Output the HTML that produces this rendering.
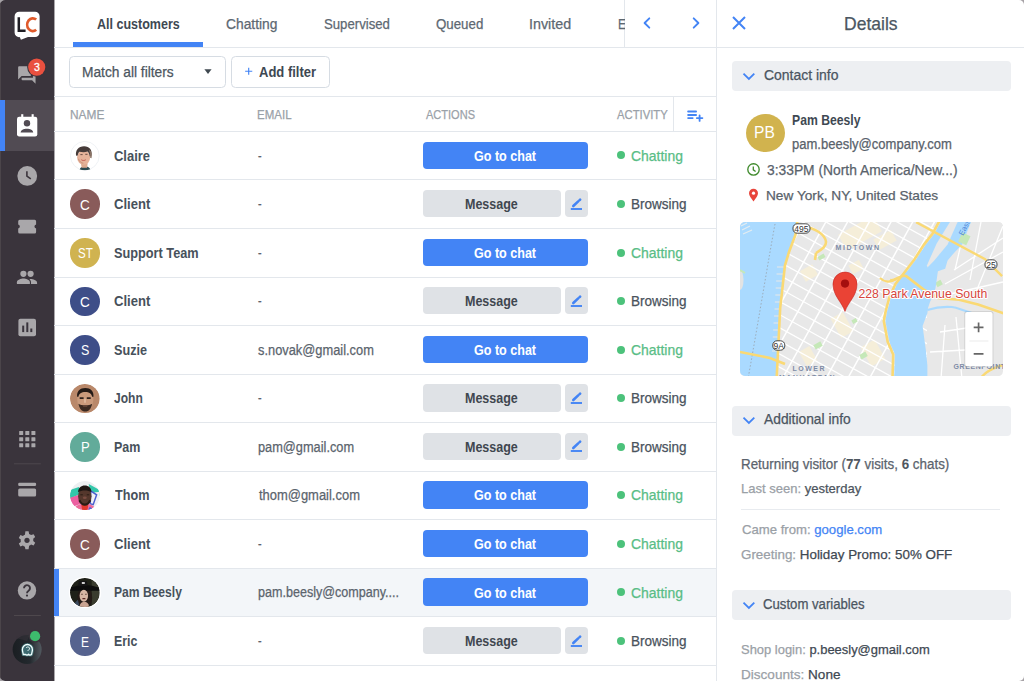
<!DOCTYPE html><html><head><meta charset="utf-8"><style>
*{box-sizing:border-box;margin:0;padding:0}
html,body{width:1024px;height:681px;overflow:hidden;background:#a6a2a6}
body{font-family:"Liberation Sans",sans-serif;position:relative}
.app{position:absolute;left:0;top:0;width:1024px;height:681px;background:#fff;border-radius:5px;overflow:hidden}
.a{position:absolute}
.t{position:absolute;white-space:nowrap;line-height:1;transform-origin:0 0}
.r{-webkit-text-stroke:0.25px currentColor}
.t b{-webkit-text-stroke:0}
.hl{position:absolute;height:1px;background:#e3e7ec}
.vl{position:absolute;width:1px;background:#e3e7ec}
.av{position:absolute;width:30px;height:30px;border-radius:50%;color:#fff;font-size:14px;line-height:30px;text-align:center}
.btn{position:absolute;border-radius:4px}
.sec{position:absolute;left:731.5px;width:279.5px;height:30px;background:#edeff2;border-radius:4px}
</style></head><body><div class="app">
<div class="a" style="left:0;top:0;width:54px;height:681px;background:#3a343c"></div><div class="a" style="left:0;top:0;width:1px;height:681px;background:#4b454a"></div><div class="a" style="left:54px;top:0;width:1px;height:681px;background:#a9a6aa"></div>
<div class="a" style="left:0;top:100px;width:54px;height:51px;background:#514b53"></div>
<div class="a" style="left:0;top:100px;width:5px;height:51px;background:#4384f5"></div>
<div class="hl" style="left:54px;top:47px;width:970px"></div>
<div class="vl" style="left:624px;top:0;height:47px"></div>
<div class="vl" style="left:716px;top:0;height:681px"></div>
<div class="hl" style="left:54px;top:96px;width:662px"></div>
<div class="vl" style="left:672.5px;top:97px;height:34px"></div>
<div class="a" style="left:73.4px;top:42px;width:129.3px;height:5px;background:#4384f5"></div>
<div class="a" style="left:69px;top:56.4px;width:157.4px;height:31.2px;border:1.3px solid #d6dce3;border-radius:4.5px"></div>
<div class="a" style="left:231.2px;top:56.4px;width:99.1px;height:31.2px;border:1.3px solid #d6dce3;border-radius:4.5px"></div>
<svg class="a" style="left:203px;top:68px" width="11" height="8"><path d="M1.4 1.3h7.2l-3.6 4.6z" fill="#3f4850"/></svg>
<svg class="a" style="left:244px;top:67px" width="10" height="10"><path d="M4.7 0.7v7.1M1.15 4.25h7.1" stroke="#4384f5" stroke-width="1.15"/></svg>
<svg class="a" style="left:641px;top:16px" width="12" height="14"><path d="M8.3 2.3L3.6 7l4.7 4.7" stroke="#4384f5" stroke-width="1.9" stroke-linecap="round" stroke-linejoin="round" fill="none"/></svg>
<svg class="a" style="left:690px;top:16px" width="12" height="14"><path d="M3.7 2.3L8.4 7l-4.7 4.7" stroke="#4384f5" stroke-width="1.9" stroke-linecap="round" stroke-linejoin="round" fill="none"/></svg>
<svg class="a" style="left:686px;top:110px" width="19" height="14"><path d="M2.1 1.5h8M2.1 5h8M2.1 8.1h4.6M10.8 8.1h5.6M13.6 5.3v5.6" stroke="#4384f5" stroke-width="1.8" stroke-linecap="round" fill="none"/></svg>
<div class="hl" style="left:54px;top:130.95px;width:662px"></div>
<div class="a" id="photo1" style="left:70.3px;top:140.95px;width:29.6px;height:29.6px;border-radius:50%;overflow:hidden"><svg width="29.6" height="29.6" viewBox="0 0 30 30"><defs><clipPath id="c1"><circle cx="15" cy="15" r="14.6"/></clipPath></defs><circle cx="15" cy="15" r="14.6" fill="#fff" stroke="#e8ecf0" stroke-width="0.7"/><g clip-path="url(#c1)">
<path d="M9.5 30c.5-2.5 2-4 5-4.3s5.5 1 6.5 4.3z" fill="#2c4a50"/>
<path d="M11 22l.8 5h5.5l.6-4.5z" fill="#dca98f"/>
<ellipse cx="13.8" cy="16.8" rx="6.6" ry="7.4" fill="#e6b39a"/>
<path d="M8.5 18c1 3 3 4.5 5 4.5" stroke="#c98f78" stroke-width="1" fill="none"/>
<path d="M6.2 15c-1-5.5 2.5-9.5 8-9.6 5.3-.1 8.5 3.6 7.6 9l-1.8 1.3c-.4-2.3-1-4-2.4-5-2.4.9-5.5.7-8 .2-1.2 1-1.6 2.5-1.7 3.9z" fill="#463b39"/>
<path d="M19.5 8.5c2.5 1.8 3.2 5 2.3 9l-1.4-.5c.2-2.5-.2-5-.9-6.5z" fill="#8a7365"/>
<path d="M10.5 13.8h2.3M15.5 13.5h2.3" stroke="#5a4038" stroke-width="0.9"/>
<path d="M11.5 19c1.2 1 3.2 1 4.5 0" stroke="#c0584f" stroke-width="1" fill="none"/></g></svg></div>
<div class="btn" style="left:423.3px;top:141.55px;width:164.4px;height:27.3px;background:#4384f5"></div>
<div class="a" style="left:616.7px;top:151.45px;width:8px;height:8px;border-radius:50%;background:#4cc27b"></div>
<div class="hl" style="left:54px;top:179.49px;width:662px"></div>
<div class="a" style="left:70.3px;top:189.49px;width:29.6px;height:29.6px;border-radius:50%;background:#895b5a"></div>
<div class="btn" style="left:423.3px;top:190.09px;width:137.5px;height:27.3px;background:#dfe2e6"></div>
<div class="btn" style="left:564.9px;top:190.09px;width:22.8px;height:27.3px;background:#dfe2e6"></div>
<svg class="a" style="left:569px;top:195.69px" width="15" height="15"><path d="M4.3 10L9.2 5.4" stroke="#4384f5" stroke-width="2.6" stroke-linecap="round"/><path d="M10.6 4.1l.5-.5" stroke="#4384f5" stroke-width="2.7" stroke-linecap="round"/><path d="M1.8 13h11.2" stroke="#4384f5" stroke-width="1.9"/></svg>
<div class="a" style="left:616.7px;top:199.99px;width:8px;height:8px;border-radius:50%;background:#4cc27b"></div>
<div class="hl" style="left:54px;top:228.03px;width:662px"></div>
<div class="a" style="left:70.3px;top:238.03px;width:29.6px;height:29.6px;border-radius:50%;background:#d0b350"></div>
<div class="btn" style="left:423.3px;top:238.63px;width:164.4px;height:27.3px;background:#4384f5"></div>
<div class="a" style="left:616.7px;top:248.53px;width:8px;height:8px;border-radius:50%;background:#4cc27b"></div>
<div class="hl" style="left:54px;top:276.57px;width:662px"></div>
<div class="a" style="left:70.3px;top:286.57px;width:29.6px;height:29.6px;border-radius:50%;background:#3e4e88"></div>
<div class="btn" style="left:423.3px;top:287.17px;width:137.5px;height:27.3px;background:#dfe2e6"></div>
<div class="btn" style="left:564.9px;top:287.17px;width:22.8px;height:27.3px;background:#dfe2e6"></div>
<svg class="a" style="left:569px;top:292.77px" width="15" height="15"><path d="M4.3 10L9.2 5.4" stroke="#4384f5" stroke-width="2.6" stroke-linecap="round"/><path d="M10.6 4.1l.5-.5" stroke="#4384f5" stroke-width="2.7" stroke-linecap="round"/><path d="M1.8 13h11.2" stroke="#4384f5" stroke-width="1.9"/></svg>
<div class="a" style="left:616.7px;top:297.07px;width:8px;height:8px;border-radius:50%;background:#4cc27b"></div>
<div class="hl" style="left:54px;top:325.11px;width:662px"></div>
<div class="a" style="left:70.3px;top:335.11px;width:29.6px;height:29.6px;border-radius:50%;background:#3e4e88"></div>
<div class="btn" style="left:423.3px;top:335.71px;width:164.4px;height:27.3px;background:#4384f5"></div>
<div class="a" style="left:616.7px;top:345.61px;width:8px;height:8px;border-radius:50%;background:#4cc27b"></div>
<div class="hl" style="left:54px;top:373.65px;width:662px"></div>
<div class="a" id="photo2" style="left:70.3px;top:383.65px;width:29.6px;height:29.6px;border-radius:50%;overflow:hidden"><svg width="29.6" height="29.6" viewBox="0 0 30 30"><circle cx="15" cy="15" r="15" fill="#b9886a"/>
<ellipse cx="15.5" cy="16" rx="8.2" ry="11" fill="#c99a7c"/>
<path d="M7.2 13c-.5-6 3-9 8.3-9s8.8 3 8.3 9l-1.4-.2c-.3-3-3-4.8-6.9-4.8s-6.6 1.8-6.9 4.8z" fill="#231a17"/>
<path d="M9.8 14.3h4M17 14.3h4" stroke="#2e211c" stroke-width="1.8"/>
<path d="M15.2 15v4" stroke="#e8c8b0" stroke-width="1.2"/>
<path d="M8.5 20c1 5 3.5 8 7 8s6-3 7-8c-1.8 1-4 1.6-7 1.6s-5.2-.6-7-1.6z" fill="#3a2a22"/>
<path d="M13.3 22.5h4.2" stroke="#6b4a3c" stroke-width="1.2"/></svg></div>
<div class="btn" style="left:423.3px;top:384.25px;width:137.5px;height:27.3px;background:#dfe2e6"></div>
<div class="btn" style="left:564.9px;top:384.25px;width:22.8px;height:27.3px;background:#dfe2e6"></div>
<svg class="a" style="left:569px;top:389.85px" width="15" height="15"><path d="M4.3 10L9.2 5.4" stroke="#4384f5" stroke-width="2.6" stroke-linecap="round"/><path d="M10.6 4.1l.5-.5" stroke="#4384f5" stroke-width="2.7" stroke-linecap="round"/><path d="M1.8 13h11.2" stroke="#4384f5" stroke-width="1.9"/></svg>
<div class="a" style="left:616.7px;top:394.15px;width:8px;height:8px;border-radius:50%;background:#4cc27b"></div>
<div class="hl" style="left:54px;top:422.19px;width:662px"></div>
<div class="a" style="left:70.3px;top:432.19px;width:29.6px;height:29.6px;border-radius:50%;background:#62ab9a"></div>
<div class="btn" style="left:423.3px;top:432.79px;width:137.5px;height:27.3px;background:#dfe2e6"></div>
<div class="btn" style="left:564.9px;top:432.79px;width:22.8px;height:27.3px;background:#dfe2e6"></div>
<svg class="a" style="left:569px;top:438.39px" width="15" height="15"><path d="M4.3 10L9.2 5.4" stroke="#4384f5" stroke-width="2.6" stroke-linecap="round"/><path d="M10.6 4.1l.5-.5" stroke="#4384f5" stroke-width="2.7" stroke-linecap="round"/><path d="M1.8 13h11.2" stroke="#4384f5" stroke-width="1.9"/></svg>
<div class="a" style="left:616.7px;top:442.69px;width:8px;height:8px;border-radius:50%;background:#4cc27b"></div>
<div class="hl" style="left:54px;top:470.73px;width:662px"></div>
<div class="a" id="photo3" style="left:70.3px;top:480.73px;width:29.6px;height:29.6px;border-radius:50%;overflow:hidden"><svg width="29.6" height="29.6" viewBox="0 0 30 30"><defs><clipPath id="c3"><circle cx="15" cy="15" r="15"/></clipPath></defs><g clip-path="url(#c3)">
<rect width="30" height="30" fill="#eef0f2"/>
<path d="M0 9l9-3 2 7-11 5z" fill="#33c7aa"/><path d="M19 3l11 6v6l-10-5z" fill="#33c7aa"/>
<path d="M0 17l9-3 2 9-11 4z" fill="#ec5fa0"/><path d="M23 12l7-1v9l-7 3z" fill="#f2f2f6"/>
<path d="M21 10l6 4-3.5 10-3-1z" stroke="#4a5fcf" stroke-width="1.5" fill="none"/>
<path d="M3 30c2-5 6-7 12-7s10 2 12 7z" fill="#ec6a9a"/><path d="M11.5 24h7l-.8 6h-5.4z" fill="#e23a2f"/><path d="M20 26l6 4h-8z" fill="#4a68d6"/>
<ellipse cx="15" cy="15.5" rx="6.8" ry="9" fill="#54372c"/>
<path d="M8.2 11.5c0-4.5 3-7 6.8-7s6.8 2.5 6.8 7c-2-1.3-4.2-1.8-6.8-1.8s-4.8.5-6.8 1.8z" fill="#1f1714"/>
<path d="M9.5 19.5c1.5 3 3.5 4.5 5.5 4.5s4-1.5 5.5-4.5" stroke="#2a1c15" stroke-width="2.2" fill="none"/>
<ellipse cx="15" cy="17" rx="2" ry="1.3" fill="#7a4d42"/><path d="M10.5 14h2.5M17 14h2.5" stroke="#2a1c15" stroke-width="1"/></g></svg></div>
<div class="btn" style="left:423.3px;top:481.33px;width:164.4px;height:27.3px;background:#4384f5"></div>
<div class="a" style="left:616.7px;top:491.23px;width:8px;height:8px;border-radius:50%;background:#4cc27b"></div>
<div class="hl" style="left:54px;top:519.27px;width:662px"></div>
<div class="a" style="left:70.3px;top:529.27px;width:29.6px;height:29.6px;border-radius:50%;background:#895b5a"></div>
<div class="btn" style="left:423.3px;top:529.87px;width:164.4px;height:27.3px;background:#4384f5"></div>
<div class="a" style="left:616.7px;top:539.77px;width:8px;height:8px;border-radius:50%;background:#4cc27b"></div>
<div class="a" style="left:54px;top:568.31px;width:662px;height:48.54px;background:#f3f6f9"></div>
<div class="a" style="left:54px;top:568.31px;width:4.5px;height:48.54px;background:#4384f5"></div>
<div class="hl" style="left:54px;top:567.81px;width:662px"></div>
<div class="a" id="photo4" style="box-shadow:0 0 0 1.2px #fff;left:70.3px;top:577.81px;width:29.6px;height:29.6px;border-radius:50%;overflow:hidden"><svg width="29.6" height="29.6" viewBox="0 0 30 30"><defs><clipPath id="c4"><circle cx="15" cy="15" r="15"/></clipPath></defs><g clip-path="url(#c4)">
<rect width="30" height="30" fill="#1f2118"/><rect x="22" y="0" width="8" height="30" fill="#3a3c2e"/>
<path d="M0 10c5-2 10-3 15-3s10 1 15 3v3H0z" fill="#0d0d0d"/>
<path d="M9 3h8l1 5H8z" fill="#151515"/><path d="M12 4h3v2h-3z" fill="#cfcfcf"/>
<path d="M9 13c-2 4-2 10 0 14h12c2-4 2-10 0-14z" fill="#241a16"/>
<ellipse cx="14" cy="18" rx="4.3" ry="6" fill="#d7b6a4"/>
<path d="M10 27c1-2 2.5-3 4.5-3s3.5 1 4.5 3v3h-9z" fill="#c9a391"/>
<path d="M12.6 21h3" stroke="#5a2a26" stroke-width="1.2"/>
<path d="M11.4 16.5h1.5M15.4 16.5h1.5" stroke="#4a302a" stroke-width="0.9"/>
<path d="M4 26l4-4 2 8H4z" fill="#3b4a5e"/></g></svg></div>
<div class="btn" style="left:423.3px;top:578.41px;width:164.4px;height:27.3px;background:#4384f5"></div>
<div class="a" style="left:616.7px;top:588.31px;width:8px;height:8px;border-radius:50%;background:#4cc27b"></div>
<div class="hl" style="left:54px;top:616.35px;width:662px"></div>
<div class="a" style="left:70.3px;top:626.35px;width:29.6px;height:29.6px;border-radius:50%;background:#56638f"></div>
<div class="btn" style="left:423.3px;top:626.95px;width:137.5px;height:27.3px;background:#dfe2e6"></div>
<div class="btn" style="left:564.9px;top:626.95px;width:22.8px;height:27.3px;background:#dfe2e6"></div>
<svg class="a" style="left:569px;top:632.55px" width="15" height="15"><path d="M4.3 10L9.2 5.4" stroke="#4384f5" stroke-width="2.6" stroke-linecap="round"/><path d="M10.6 4.1l.5-.5" stroke="#4384f5" stroke-width="2.7" stroke-linecap="round"/><path d="M1.8 13h11.2" stroke="#4384f5" stroke-width="1.9"/></svg>
<div class="a" style="left:616.7px;top:636.85px;width:8px;height:8px;border-radius:50%;background:#4cc27b"></div>
<div class="hl" style="left:54px;top:664.89px;width:662px"></div>
<svg class="a" style="left:731px;top:15px" width="16" height="16"><path d="M2 2l12 12M14 2L2 14" stroke="#4384f5" stroke-width="2"/></svg>
<div class="sec" style="top:61px"></div>
<svg class="a" style="left:742px;top:70.5px" width="14" height="10"><path d="M1.5 2.6l5.4 5.4 5.4-5.4" stroke="#4384f5" stroke-width="1.8" fill="none"/></svg>
<div class="sec" style="top:405.5px"></div>
<svg class="a" style="left:742px;top:415.0px" width="14" height="10"><path d="M1.5 2.6l5.4 5.4 5.4-5.4" stroke="#4384f5" stroke-width="1.8" fill="none"/></svg>
<div class="sec" style="top:590.3px"></div>
<svg class="a" style="left:742px;top:599.8px" width="14" height="10"><path d="M1.5 2.6l5.4 5.4 5.4-5.4" stroke="#4384f5" stroke-width="1.8" fill="none"/></svg>
<div class="a" style="left:745.9px;top:113.7px;width:38.8px;height:38.8px;border-radius:50%;background:#d1b34e"></div>
<svg class="a" style="left:746px;top:162px" width="15" height="15"><circle cx="7.5" cy="7.4" r="5.7" stroke="#3f8a2c" stroke-width="1.35" fill="none"/><path d="M7.3 4.4v3.4l2.3 1.7" stroke="#3f8a2c" stroke-width="1.3" fill="none"/></svg>
<svg class="a" style="left:748px;top:188px" width="11" height="14"><path d="M5.5 13.5C3 10 1 7.6 1 5.2A4.5 4.5 0 0 1 10 5.2C10 7.6 8 10 5.5 13.5z" fill="#e8453c"/><circle cx="5.5" cy="5.2" r="1.6" fill="#fff"/></svg>
<div class="hl" style="left:741.2px;top:508.5px;width:259.3px;background:#e8ebef"></div>
<div id="map" class="a" style="left:740.2px;top:221.6px;width:262.6px;height:154.4px;border-radius:5px;overflow:hidden;background:#e8e8e8"><svg class="a" style="left:0;top:0" width="262.6" height="154.4" viewBox="0 0 262.6 154.4">
<rect width="262.6" height="154.4" fill="#e8e8e8"/>
<rect x="100" y="2" width="40" height="18" fill="#f5eed9" transform="rotate(-29 120.0 11.0)"/>
<rect x="62" y="45" width="14" height="12" fill="#f5eed9" transform="rotate(-29 69.0 51.0)"/>
<rect x="95" y="92" width="14" height="22" fill="#f5eed9" transform="rotate(-29 102.0 103.0)"/>
<rect x="125" y="120" width="16" height="22" fill="#f5eed9" transform="rotate(-29 133.0 131.0)"/>
<rect x="62" y="126" width="12" height="16" fill="#f5eed9" transform="rotate(-29 68.0 134.0)"/>
<rect x="135" y="12" width="20" height="12" fill="#f5eed9" transform="rotate(-29 145.0 18.0)"/>
<rect x="206" y="100" width="10" height="16" fill="#f5eed9" transform="rotate(-29 211.0 108.0)"/>
<rect x="110" y="40" width="12" height="10" fill="#f5eed9" transform="rotate(-29 116.0 45.0)"/>
<path d="M-52.6 -418.7L647.1 -30.8M-58.2 -408.6L641.5 -20.8M-63.7 -398.6L636.0 -10.7M-69.3 -388.5L630.4 -0.6M-74.9 -378.4L624.8 9.4M-80.5 -368.4L619.2 19.5M-86.0 -358.3L613.7 29.5M-91.6 -348.3L608.1 39.6M-97.2 -338.2L602.5 49.6M-102.8 -328.1L596.9 59.7M-108.3 -318.1L591.4 69.8M-113.9 -308.0L585.8 79.8M-119.5 -298.0L580.2 89.9M-125.1 -287.9L574.6 99.9M-130.6 -277.9L569.1 110.0M-136.2 -267.8L563.5 120.1M-141.8 -257.7L557.9 130.1M-147.4 -247.7L552.3 140.2M-152.9 -237.6L546.8 150.2M-158.5 -227.6L541.2 160.3M-164.1 -217.5L535.6 170.3M-169.7 -207.4L530.0 180.4M-175.2 -197.4L524.5 190.5M-180.8 -187.3L518.9 200.5M-186.4 -177.3L513.3 210.6M-192.0 -167.2L507.7 220.6M-197.5 -157.2L502.1 230.7M-203.1 -147.1L496.6 240.7M-208.7 -137.0L491.0 250.8M-214.3 -127.0L485.4 260.9M-219.8 -116.9L479.8 270.9M-225.4 -106.9L474.3 281.0M-231.0 -96.8L468.7 291.0M-236.6 -86.7L463.1 301.1M-242.1 -76.7L457.5 311.2M-247.7 -66.6L452.0 321.2M-253.3 -56.6L446.4 331.3M-258.9 -46.5L440.8 341.3M-264.5 -36.5L435.2 351.4M-270.0 -26.4L429.7 361.4M-275.6 -16.3L424.1 371.5M-281.2 -6.3L418.5 381.6M-286.8 3.8L412.9 391.6M-292.3 13.8L407.4 401.7M-297.9 23.9L401.8 411.7M-303.5 33.9L396.2 421.8M-309.1 44.0L390.6 431.9M-314.6 54.1L385.1 441.9M-320.2 64.1L379.5 452.0M-325.8 74.2L373.9 462.0M-331.4 84.2L368.3 472.1M-336.9 94.3L362.8 482.1M-342.5 104.4L357.2 492.2M-348.1 114.4L351.6 502.3M-353.7 124.5L346.0 512.3M-359.2 134.5L340.5 522.4M-364.8 144.6L334.9 532.4M-370.4 154.6L329.3 542.5M-376.0 164.7L323.7 552.6M-381.5 174.8L318.2 562.6M-387.1 184.8L312.6 572.7" stroke="#fff" stroke-width="1.3"/>
<path d="M-562.5 150.5L-174.6 -549.2M-545.8 159.7L-158.0 -540.0M-529.2 168.9L-141.4 -530.8M-512.6 178.1L-124.8 -521.6M-496.0 187.4L-108.1 -512.3M-479.4 196.6L-91.5 -503.1M-462.8 205.8L-74.9 -493.9M-446.1 215.0L-58.3 -484.7M-429.5 224.2L-41.7 -475.5M-412.9 233.4L-25.0 -466.3M-396.3 242.6L-8.4 -457.1M-379.7 251.8L8.2 -447.9M-363.0 261.0L24.8 -438.7M-346.4 270.3L41.4 -429.4M-329.8 279.5L58.0 -420.2M-313.2 288.7L74.7 -411.0M-296.6 297.9L91.3 -401.8M-280.0 307.1L107.9 -392.6M-263.3 316.3L124.5 -383.4M-246.7 325.5L141.1 -374.2M-230.1 334.7L157.7 -365.0M-213.5 343.9L174.4 -355.8M-196.9 353.2L191.0 -346.5M-180.2 362.4L207.6 -337.3M-163.6 371.6L224.2 -328.1M-147.0 380.8L240.8 -318.9M-130.4 390.0L257.5 -309.7M-113.8 399.2L274.1 -300.5M-97.2 408.4L290.7 -291.3M-80.5 417.6L307.3 -282.1M-63.9 426.8L323.9 -272.8M-47.3 436.1L340.5 -263.6M-30.7 445.3L357.2 -254.4M-14.1 454.5L373.8 -245.2M2.5 463.7L390.4 -236.0M19.2 472.9L407.0 -226.8M35.8 482.1L423.6 -217.6M52.4 491.3L440.2 -208.4M69.0 500.5L456.9 -199.2M85.6 509.8L473.5 -189.9M102.3 519.0L490.1 -180.7M118.9 528.2L506.7 -171.5M135.5 537.4L523.3 -162.3M152.1 546.6L540.0 -153.1M168.7 555.8L556.6 -143.9M185.3 565.0L573.2 -134.7M202.0 574.2L589.8 -125.5M218.6 583.4L606.4 -116.3M235.2 592.7L623.0 -107.0M251.8 601.9L639.7 -97.8M268.4 611.1L656.3 -88.6M285.0 620.3L672.9 -79.4M301.7 629.5L689.5 -70.2M318.3 638.7L706.1 -61.0M334.9 647.9L722.8 -51.8M351.5 657.1L739.4 -42.6M368.1 666.3L756.0 -33.4M384.8 675.6L772.6 -24.1M401.4 684.8L789.2 -14.9M418.0 694.0L805.8 -5.7M434.6 703.2L822.5 3.5" stroke="#fff" stroke-width="1.5"/>
<g clip-path="url(#qclip)"><rect x="150" y="0" width="120" height="160" fill="#e8e8e8"/><path d="M205 62L263 30M210 72L263 60M214 48L263 16M215 48L226 0M230 58L241 0M236 70L263 4M200 110L240 104M205 103L201 157M216 95L222 157M228 100L250 150M190 130L225 128" stroke="#fff" stroke-width="1.3" fill="none"/></g>
<defs><clipPath id="qclip"><polygon points="196,48 205,30 222,0 263,0 263,155 187,155 187,88"/></clipPath></defs>
<rect x="78" y="33" width="7" height="4" fill="#c5e8b8" transform="rotate(-29 81.5 35.0)"/>
<rect x="112" y="97" width="5" height="4" fill="#c5e8b8" transform="rotate(-29 114.5 99.0)"/>
<rect x="74" y="121" width="8" height="5" fill="#c5e8b8" transform="rotate(-29 78.0 123.5)"/>
<rect x="120" y="131" width="7" height="5" fill="#c5e8b8" transform="rotate(-29 123.5 133.5)"/>
<rect x="196" y="59" width="6" height="5" fill="#c5e8b8" transform="rotate(-29 199.0 61.5)"/>
<rect x="210" y="4" width="7" height="12" fill="#c5e8b8" transform="rotate(-29 213.5 10.0)"/>
<polygon points="0,0 57,0 55.4,12.9 49,30 44.9,43.5 42,70 40.2,85.8 38.5,120 36.6,157 0,157" fill="#aadaff"/>
<path d="M2 8l8-4M3 12l9-4M1 4l6-3" stroke="#e4ecf0" stroke-width="1.2"/><ellipse cx="0" cy="58" rx="3.5" ry="10" fill="#e3e3e3"/><path d="M0 48l5 3" stroke="#c5e8b8" stroke-width="2"/>
<path d="M35 2C28 40 20 90 8 157" stroke="#9aa7b3" stroke-width="0.9" stroke-dasharray="1.5 2" fill="none"/>
<path d="M44.0 45h-7" stroke="#e8e8e8" stroke-width="1.2"/>
<path d="M43.6 52h-7" stroke="#e8e8e8" stroke-width="1.2"/>
<path d="M43.2 59h-7" stroke="#e8e8e8" stroke-width="1.2"/>
<path d="M42.7 66h-7" stroke="#e8e8e8" stroke-width="1.2"/>
<path d="M42.3 73h-7" stroke="#e8e8e8" stroke-width="1.2"/>
<path d="M41.9 80h-7" stroke="#e8e8e8" stroke-width="1.2"/>
<path d="M41.5 87h-7" stroke="#e8e8e8" stroke-width="1.2"/>
<path d="M41.1 94h-7" stroke="#e8e8e8" stroke-width="1.2"/>
<path d="M40.6 101h-7" stroke="#e8e8e8" stroke-width="1.2"/>
<path d="M40.2 108h-7" stroke="#e8e8e8" stroke-width="1.2"/>
<path d="M39.8 115h-7" stroke="#e8e8e8" stroke-width="1.2"/>
<path d="M39.4 122h-7" stroke="#e8e8e8" stroke-width="1.2"/>
<path d="M39.0 129h-7" stroke="#e8e8e8" stroke-width="1.2"/>
<polygon points="201.6,-2.0 194.3,11.7 185.8,22.6 176.1,37.2 167.6,48.5 163.6,51.0 157.0,62.0 151.0,75.0 147.0,90.0 145.4,99.1 149.3,119.8 154.9,132.4 154.1,157.0 187.4,157.0 187.4,143.5 185.8,127.7 182.6,103.9 187.4,91.2 188.0,86.0 190.0,80.0 191.9,75.9 195.5,66.2 197.9,49.3 205.2,46.8 207.6,38.4 214.9,29.9 222.1,22.6 231.8,-2.0" fill="#aadaff"/>
<polygon points="211.2,-2 196.7,21.4 187,43.2 187.5,45.5 194.3,38.4 207.6,22.6 218.5,-2" fill="#e8e8e8"/><path d="M187.4 88C195 85.5 205 84.5 212 85S222 89 240 93" stroke="#aadaff" stroke-width="2.2" fill="none"/><rect x="219.7" y="11.7" width="9" height="10" fill="#c5e8b8" transform="rotate(25 224 17)"/>
<path d="M57.5 -2L55.4 12.9 49 30 44.9 43.5 42 70 40.2 85.8 38.5 120 36.6 157" stroke="#fad974" stroke-width="2.6" fill="none"/>
<path d="M0 130L30 136 45 142" stroke="#fad974" stroke-width="2.6" fill="none"/>
<path d="M62 4C75 6 85 12 86 20 86 26 80 28 76 31M76 31L75 38" stroke="#fad974" stroke-width="2.6" fill="none"/>
<path d="M200 -2L192.5 11.7 184 22.6 174.5 37.2 166 48.5 155.5 62 149.5 75 145.5 90 143.8 99.1 147.7 119.8 153.2 132.4 152.5 157" stroke="#fad974" stroke-width="2.6" fill="none"/>
<path d="M150 58C155 60 160 52 166 54L183.4 67.4 197.9 75.9 219.1 77.7 238.1 82.5 263.5 91.2" stroke="#fad974" stroke-width="2.6" fill="none"/>
<path d="M176.1 0.2L245.1 37.2 262.1 54.1" stroke="#fad974" stroke-width="2.4" fill="none"/>
<path d="M140 56C144 60 150 61 156 57" stroke="#fad974" stroke-width="2.4" fill="none"/>
<path d="M240 157C245 150 252 146 263 143" stroke="#fad974" stroke-width="2.4" fill="none"/>
<rect x="53.0" y="1.8" width="17" height="9.4" rx="4.2" fill="#fff" stroke="#333" stroke-width="0.9"/><text x="61.5" y="9.7" font-family="Liberation Sans" font-size="8.6" fill="#333" text-anchor="middle">495</text>
<rect x="245.0" y="37.8" width="12" height="9.4" rx="4.2" fill="#fff" stroke="#333" stroke-width="0.9"/><text x="251" y="45.7" font-family="Liberation Sans" font-size="8.6" fill="#333" text-anchor="middle">25</text>
<rect x="32.8" y="118.8" width="12" height="9.4" rx="4.2" fill="#fff" stroke="#333" stroke-width="0.9"/><text x="38.8" y="126.7" font-family="Liberation Sans" font-size="8.6" fill="#333" text-anchor="middle">9A</text>
<text x="95.5" y="28.5" font-family="Liberation Sans" font-size="7" font-weight="700" letter-spacing="1.6" fill="#7d8ba6">MIDTOWN</text>
<text x="52.5" y="149.3" font-family="Liberation Sans" font-size="7" font-weight="700" letter-spacing="1.5" fill="#7d8ba6">LOWER</text>
<text x="39" y="157.8" font-family="Liberation Sans" font-size="7" font-weight="700" letter-spacing="1.5" fill="#7d8ba6">MANHATTAN</text>
<text x="213.5" y="147.5" font-family="Liberation Sans" font-size="7" font-weight="700" letter-spacing="0.6" fill="#7d8ba6">GREENPOINT</text>
<text transform="translate(223 14) rotate(-62)" font-family="Liberation Sans" font-size="7.5" fill="#4f86d8">East</text>
<path d="M105 89.5C102 80 93 74 93 62A12 12 0 0 1 117 62C117 74 108 80 105 89.5z" fill="#ea4335" stroke="#c5221f" stroke-width="0.6"/>
<circle cx="105" cy="61.6" r="4.1" fill="#a50e0e"/>
<text x="118.4" y="75.7" font-family="Liberation Sans" font-size="12.8" fill="#d6453c" stroke="#fff" stroke-width="2.2" paint-order="stroke" stroke-linejoin="round" textLength="128.9" lengthAdjust="spacingAndGlyphs">228 Park Avenue South</text>
<rect x="224.4" y="89.2" width="29" height="56" rx="2" fill="#000" opacity="0.12"/>
<rect x="225.2" y="90" width="27.4" height="54.4" rx="2" fill="#fff"/>
<path d="M233.7 105.4h9.8M238.6 100.5v9.8M233.7 131.9h9.8" stroke="#666" stroke-width="1.7"/>
<path d="M229.4 119h19" stroke="#e6e6e6" stroke-width="0.8"/>
</svg></div>
<svg class="a" style="left:0;top:0" width="54" height="681" viewBox="0 0 54 681">
<path d="M19.1 11.8h16a4.5 4.5 0 0 1 4.5 4.5v16.3a4.5 4.5 0 0 1-4.5 4.5H28L20.9 39.8 19.8 37.1A4.5 4.5 0 0 1 14.6 32.6V16.3a4.5 4.5 0 0 1 4.5-4.5z" fill="#fff"/>
<path d="M18.8 17.2V30.8h6.8" stroke="#1f1e24" stroke-width="2.5" fill="none"/>
<path d="M36.2 19.6A5.6 6.4 0 1 0 36.2 29.8" stroke="#e05a2b" stroke-width="2.7" fill="none"/>
<g transform="translate(16.4 64.6) scale(0.87)" fill="#a9a7aa"><path d="M21 6h-2v9H6v2c0 .55.45 1 1 1h11l4 4V7c0-.55-.45-1-1-1zm-4 6V3c0-.55-.45-1-1-1H3c-.55 0-1 .45-1 1v14l4-4h10c.55 0 1-.45 1-1z"/></g>
<circle cx="36.7" cy="67.1" r="9.6" fill="#3a343c"/>
<circle cx="36.7" cy="67.1" r="8.6" fill="#e9503f"/>
<text x="36.8" y="70.9" font-family="Liberation Sans" font-size="10.5" fill="#fff" stroke="#fff" stroke-width="0.3" text-anchor="middle">3</text>
<rect x="17" y="116.7" width="20.3" height="19.7" rx="2.2" fill="#fff"/>
<rect x="21.2" y="114.2" width="2.1" height="4" fill="#fff"/>
<rect x="31.6" y="114.2" width="2.1" height="4" fill="#fff"/>
<circle cx="27" cy="123.3" r="3.2" fill="#514b53"/>
<path d="M20.6 132.6c0-2.5 3-3.9 6.3-3.9s6.3 1.4 6.3 3.9z" fill="#514b53"/>
<circle cx="27.25" cy="175.9" r="9.9" fill="#a9a7aa"/>
<path d="M26.9 171.3v4.8l3.9 2.8" stroke="#3a343c" stroke-width="1.6" fill="none"/>
<path d="M19.7 219.7h14.9a1.5 1.5 0 0 1 1.5 1.5v3.3a2.1 2.1 0 0 0 0 4.1v3.3a1.5 1.5 0 0 1-1.5 1.5H19.7a1.5 1.5 0 0 1-1.5-1.5v-3.3a2.1 2.1 0 0 0 0-4.1v-3.3a1.5 1.5 0 0 1 1.5-1.5z" fill="#a9a7aa"/>
<circle cx="23.4" cy="273.8" r="3.1" fill="#a9a7aa"/><circle cx="30.6" cy="273.8" r="3.1" fill="#a9a7aa"/>
<path d="M16.9 284v-1.8c0-2.3 4.2-3.6 6.5-3.6s6.5 1.3 6.5 3.6V284z" fill="#a9a7aa"/>
<path d="M31 284v-1.8c0-1.2-.6-2.2-1.5-3 .4-.1.8-.1 1.1-.1 2.3 0 6.5 1.3 6.5 3.6V284z" fill="#a9a7aa"/>
<rect x="18.4" y="318.8" width="17.6" height="17.5" rx="2" fill="#a9a7aa"/>
<rect x="22.2" y="325.6" width="2" height="6.5" fill="#3a343c"/><rect x="26.3" y="322.4" width="2" height="9.7" fill="#3a343c"/><rect x="30.3" y="328.5" width="2" height="3.6" fill="#3a343c"/>
<rect x="19.2" y="431.1" width="4" height="4" rx="0.5" fill="#a9a7aa"/><rect x="25.3" y="431.1" width="4" height="4" rx="0.5" fill="#a9a7aa"/><rect x="31.4" y="431.1" width="4" height="4" rx="0.5" fill="#a9a7aa"/><rect x="19.2" y="437.2" width="4" height="4" rx="0.5" fill="#a9a7aa"/><rect x="25.3" y="437.2" width="4" height="4" rx="0.5" fill="#a9a7aa"/><rect x="31.4" y="437.2" width="4" height="4" rx="0.5" fill="#a9a7aa"/><rect x="19.2" y="443.3" width="4" height="4" rx="0.5" fill="#a9a7aa"/><rect x="25.3" y="443.3" width="4" height="4" rx="0.5" fill="#a9a7aa"/><rect x="31.4" y="443.3" width="4" height="4" rx="0.5" fill="#a9a7aa"/>
<rect x="14" y="463.3" width="26.8" height="1" fill="#4e484d"/>
<rect x="18.2" y="482.8" width="17.9" height="3.1" rx="1.2" fill="#a9a7aa"/>
<rect x="18.2" y="488.4" width="17.9" height="8" rx="1.5" fill="#a9a7aa"/>
<g transform="translate(27 540.3)"><path fill="#a9a7aa" d="M-1.6-9h3.2l.5 2.6a6.8 6.8 0 0 1 2 1.2l2.5-.9 1.6 2.8-2 1.7a6.8 6.8 0 0 1 0 2.3l2 1.7-1.6 2.8-2.5-.9a6.8 6.8 0 0 1-2 1.2L1.6 9h-3.2l-.5-2.6a6.8 6.8 0 0 1-2-1.2l-2.5.9-1.6-2.8 2-1.7a6.8 6.8 0 0 1 0-2.3l-2-1.7 1.6-2.8 2.5.9a6.8 6.8 0 0 1 2-1.2z"/><circle r="2.6" fill="#3a343c"/></g>
<circle cx="27" cy="590.4" r="9.2" fill="#a9a7aa"/>
<path d="M24 588.2a3 3 0 1 1 4.6 2.5c-1 .7-1.6 1.2-1.6 2.6" stroke="#3a343c" stroke-width="1.9" fill="none"/>
<circle cx="27" cy="595.6" r="1.1" fill="#3a343c"/>
<rect x="14" y="615" width="26.8" height="1" fill="#4e484d"/>
<defs><linearGradient id="avg" x1="0" x2="1" y1="0" y2="0"><stop offset="0" stop-color="#1a1e22"/><stop offset="0.6" stop-color="#23292e"/><stop offset="1" stop-color="#525a60"/></linearGradient></defs>
<circle cx="27.1" cy="649.5" r="14.5" fill="url(#avg)"/>
<path d="M16 638a14.5 14.5 0 0 1 14-3l-3 6z" fill="#3a343c" opacity="0.5"/>
<path d="M23.3 654.5c-.3-1.5-.9-3-.9-5a5 5 0 0 1 10 0c0 2-.6 3.5-.9 5-1 .8-2.5.6-3-.2-.6.8-2.2 1-3 .2z" stroke="#5fd6d6" stroke-width="3" fill="none" opacity="0.35"/>
<path d="M23.3 654.5c-.3-1.5-.9-3-.9-5a5 5 0 0 1 10 0c0 2-.6 3.5-.9 5-1 .8-2.5.6-3-.2-.6.8-2.2 1-3 .2z" stroke="#f0ffff" stroke-width="1.3" fill="#3d6a70"/>
<path d="M26 648c1-1.5 3-1.5 3.5 0s-1 2.5-2 2.5" stroke="#f0ffff" stroke-width="0.8" fill="none"/>
<circle cx="35.1" cy="636.2" r="6.4" fill="#3a343c"/>
<circle cx="35.1" cy="636.2" r="5.1" fill="#3dbb6d"/>
</svg>
<div class="t" id="t0" style="left:96.81px;top:16.22px;font-size:15.51px;font-weight:700;color:#3e4852;transform:scaleX(0.8078);">All customers</div>
<div class="t r" id="t1" style="left:226.00px;top:16.88px;font-size:14.49px;font-weight:400;color:#5d6872;transform:scaleX(0.9537);">Chatting</div>
<div class="t r" id="t2" style="left:324.00px;top:16.88px;font-size:14.49px;font-weight:400;color:#5d6872;transform:scaleX(0.9097);">Supervised</div>
<div class="t r" id="t3" style="left:435.84px;top:16.88px;font-size:14.49px;font-weight:400;color:#5d6872;transform:scaleX(0.9176);">Queued</div>
<div class="t r" id="t4" style="left:529.40px;top:16.88px;font-size:14.49px;font-weight:400;color:#5d6872;transform:scaleX(0.9878);">Invited</div>
<div class="t r" id="t5" style="left:618.08px;top:16.88px;font-size:14.49px;font-weight:400;color:#5d6872;transform:scaleX(0.8333);">E</div>
<div class="t r" id="t6" style="left:82.20px;top:65.67px;font-size:13.91px;font-weight:400;color:#4c5660;transform:scaleX(0.9891);">Match all filters</div>
<div class="t" id="t7" style="left:259.42px;top:65.08px;font-size:14.49px;font-weight:700;color:#3e4852;transform:scaleX(0.8984);">Add filter</div>
<div class="t r" id="t8" style="left:70.05px;top:108.91px;font-size:12.46px;font-weight:400;color:#9aa1a8;transform:scaleX(0.9543);">NAME</div>
<div class="t r" id="t9" style="left:257.22px;top:108.91px;font-size:12.46px;font-weight:400;color:#9aa1a8;transform:scaleX(0.9243);">EMAIL</div>
<div class="t r" id="t10" style="left:425.94px;top:108.91px;font-size:12.46px;font-weight:400;color:#9aa1a8;transform:scaleX(0.8857);">ACTIONS</div>
<div class="t r" id="t11" style="left:617.18px;top:108.91px;font-size:12.46px;font-weight:400;color:#9aa1a8;transform:scaleX(0.9054);">ACTIVITY</div>
<div class="t" id="t12" style="left:114.05px;top:148.53px;font-size:14.49px;font-weight:700;color:#47515b;transform:scaleX(0.8950);">Claire</div>
<div class="t r" id="t13" style="left:257.65px;top:148.53px;font-size:14.49px;font-weight:400;color:#5b646d;transform:scaleX(0.7400);">-</div>
<div class="t" id="t14" style="left:474.06px;top:148.68px;font-size:14.20px;font-weight:700;color:#fff;transform:scaleX(0.8843);">Go to chat</div>
<div class="t r" id="t15" style="left:631.39px;top:148.68px;font-size:14.20px;font-weight:400;color:#59bd86;transform:scaleX(0.9827);">Chatting</div>
<div class="t" id="t16" style="left:114.05px;top:197.07px;font-size:14.49px;font-weight:700;color:#47515b;transform:scaleX(0.9025);">Client</div>
<div class="t r" id="t17" style="left:257.65px;top:197.07px;font-size:14.49px;font-weight:400;color:#5b646d;transform:scaleX(0.7400);">-</div>
<div class="t" id="t18" style="left:465.12px;top:197.22px;font-size:14.20px;font-weight:700;color:#3f4750;transform:scaleX(0.8814);">Message</div>
<div class="t r" id="t19" style="left:631.40px;top:197.22px;font-size:14.20px;font-weight:400;color:#4a535d;transform:scaleX(0.9517);">Browsing</div>
<div class="t" id="t20" style="left:114.06px;top:245.61px;font-size:14.49px;font-weight:700;color:#47515b;transform:scaleX(0.8789);">Support Team</div>
<div class="t r" id="t21" style="left:257.65px;top:245.61px;font-size:14.49px;font-weight:400;color:#5b646d;transform:scaleX(0.7400);">-</div>
<div class="t" id="t22" style="left:474.06px;top:245.76px;font-size:14.20px;font-weight:700;color:#fff;transform:scaleX(0.8843);">Go to chat</div>
<div class="t r" id="t23" style="left:631.39px;top:245.76px;font-size:14.20px;font-weight:400;color:#59bd86;transform:scaleX(0.9827);">Chatting</div>
<div class="t" id="t24" style="left:114.05px;top:294.15px;font-size:14.49px;font-weight:700;color:#47515b;transform:scaleX(0.9025);">Client</div>
<div class="t r" id="t25" style="left:257.65px;top:294.15px;font-size:14.49px;font-weight:400;color:#5b646d;transform:scaleX(0.7400);">-</div>
<div class="t" id="t26" style="left:465.12px;top:294.30px;font-size:14.20px;font-weight:700;color:#3f4750;transform:scaleX(0.8814);">Message</div>
<div class="t r" id="t27" style="left:631.40px;top:294.30px;font-size:14.20px;font-weight:400;color:#4a535d;transform:scaleX(0.9517);">Browsing</div>
<div class="t" id="t28" style="left:114.06px;top:342.69px;font-size:14.49px;font-weight:700;color:#47515b;transform:scaleX(0.8716);">Suzie</div>
<div class="t r" id="t29" style="left:257.62px;top:342.69px;font-size:14.49px;font-weight:400;color:#5b646d;transform:scaleX(0.8869);">s.novak@gmail.com</div>
<div class="t" id="t30" style="left:474.06px;top:342.84px;font-size:14.20px;font-weight:700;color:#fff;transform:scaleX(0.8843);">Go to chat</div>
<div class="t r" id="t31" style="left:631.39px;top:342.84px;font-size:14.20px;font-weight:400;color:#59bd86;transform:scaleX(0.9827);">Chatting</div>
<div class="t" id="t32" style="left:114.08px;top:391.23px;font-size:14.49px;font-weight:700;color:#47515b;transform:scaleX(0.8324);">John</div>
<div class="t r" id="t33" style="left:257.65px;top:391.23px;font-size:14.49px;font-weight:400;color:#5b646d;transform:scaleX(0.7400);">-</div>
<div class="t" id="t34" style="left:465.12px;top:391.38px;font-size:14.20px;font-weight:700;color:#3f4750;transform:scaleX(0.8814);">Message</div>
<div class="t r" id="t35" style="left:631.40px;top:391.38px;font-size:14.20px;font-weight:400;color:#4a535d;transform:scaleX(0.9517);">Browsing</div>
<div class="t" id="t36" style="left:114.07px;top:439.77px;font-size:14.49px;font-weight:700;color:#47515b;transform:scaleX(0.8600);">Pam</div>
<div class="t r" id="t37" style="left:257.62px;top:439.77px;font-size:14.49px;font-weight:400;color:#5b646d;transform:scaleX(0.8824);">pam@gmail.com</div>
<div class="t" id="t38" style="left:465.12px;top:439.92px;font-size:14.20px;font-weight:700;color:#3f4750;transform:scaleX(0.8814);">Message</div>
<div class="t r" id="t39" style="left:631.40px;top:439.92px;font-size:14.20px;font-weight:400;color:#4a535d;transform:scaleX(0.9517);">Browsing</div>
<div class="t" id="t40" style="left:114.94px;top:488.31px;font-size:14.49px;font-weight:700;color:#47515b;transform:scaleX(0.8718);">Thom</div>
<div class="t r" id="t41" style="left:258.51px;top:488.31px;font-size:14.49px;font-weight:400;color:#5b646d;transform:scaleX(0.8938);">thom@gmail.com</div>
<div class="t" id="t42" style="left:474.06px;top:488.46px;font-size:14.20px;font-weight:700;color:#fff;transform:scaleX(0.8843);">Go to chat</div>
<div class="t r" id="t43" style="left:631.39px;top:488.46px;font-size:14.20px;font-weight:400;color:#59bd86;transform:scaleX(0.9827);">Chatting</div>
<div class="t" id="t44" style="left:114.05px;top:536.85px;font-size:14.49px;font-weight:700;color:#47515b;transform:scaleX(0.9025);">Client</div>
<div class="t r" id="t45" style="left:257.65px;top:536.85px;font-size:14.49px;font-weight:400;color:#5b646d;transform:scaleX(0.7400);">-</div>
<div class="t" id="t46" style="left:474.06px;top:537.00px;font-size:14.20px;font-weight:700;color:#fff;transform:scaleX(0.8843);">Go to chat</div>
<div class="t r" id="t47" style="left:631.39px;top:537.00px;font-size:14.20px;font-weight:400;color:#59bd86;transform:scaleX(0.9827);">Chatting</div>
<div class="t" id="t48" style="left:114.08px;top:585.39px;font-size:14.49px;font-weight:700;color:#47515b;transform:scaleX(0.8346);">Pam Beesly</div>
<div class="t r" id="t49" style="left:257.62px;top:585.39px;font-size:14.49px;font-weight:400;color:#5b646d;transform:scaleX(0.8679);">pam.beesly@company....</div>
<div class="t" id="t50" style="left:474.06px;top:585.54px;font-size:14.20px;font-weight:700;color:#fff;transform:scaleX(0.8843);">Go to chat</div>
<div class="t r" id="t51" style="left:631.39px;top:585.54px;font-size:14.20px;font-weight:400;color:#59bd86;transform:scaleX(0.9827);">Chatting</div>
<div class="t" id="t52" style="left:114.07px;top:633.93px;font-size:14.49px;font-weight:700;color:#47515b;transform:scaleX(0.8519);">Eric</div>
<div class="t r" id="t53" style="left:257.65px;top:633.93px;font-size:14.49px;font-weight:400;color:#5b646d;transform:scaleX(0.7400);">-</div>
<div class="t" id="t54" style="left:465.12px;top:634.08px;font-size:14.20px;font-weight:700;color:#3f4750;transform:scaleX(0.8814);">Message</div>
<div class="t r" id="t55" style="left:631.40px;top:634.08px;font-size:14.20px;font-weight:400;color:#4a535d;transform:scaleX(0.9517);">Browsing</div>
<div class="t r" id="t56" style="left:844.01px;top:15.62px;font-size:17.97px;font-weight:400;color:#4b5662;transform:scaleX(0.9759);">Details</div>
<div class="t r" id="t57" style="left:763.59px;top:68.57px;font-size:13.91px;font-weight:400;color:#4b5561;transform:scaleX(1.0041);">Contact info</div>
<div class="t" id="t58" style="left:792.25px;top:113.15px;font-size:14.06px;font-weight:700;color:#3e4852;transform:scaleX(0.8684);">Pam Beesly</div>
<div class="t r" id="t59" style="left:792.22px;top:138.00px;font-size:13.77px;font-weight:400;color:#59626b;transform:scaleX(0.9464);">pam.beesly@company.com</div>
<div class="t r" id="t60" style="left:767.38px;top:163.35px;font-size:14.06px;font-weight:400;color:#59626b;transform:scaleX(0.9839);">3:33PM (North America/New...)</div>
<div class="t r" id="t61" style="left:766.37px;top:188.57px;font-size:13.33px;font-weight:400;color:#59626b;transform:scaleX(1.0251);">New York, NY, United States</div>
<div class="t r" id="t62" style="left:764.39px;top:413.00px;font-size:13.77px;font-weight:400;color:#4b5561;transform:scaleX(1.0023);">Additional info</div>
<div class="t r" id="t63" style="left:740.62px;top:457.80px;font-size:13.77px;font-weight:400;color:#5b636d;transform:scaleX(0.9723);">Returning visitor (<b style="color:#4f5760">77</b> visits, <b style="color:#4f5760">6</b> chats)</div>
<div class="t r" id="t64" style="left:740.62px;top:481.94px;font-size:13.48px;font-weight:400;color:#4d555e;transform:scaleX(0.9669);"><span style="color:#9aa0a6">Last seen:</span> yesterday</div>
<div class="t r" id="t65" style="left:741.60px;top:523.29px;font-size:13.19px;font-weight:400;color:#4d555e;transform:scaleX(0.9957);"><span style="color:#9aa0a6">Came from:</span> <span style="color:#4384f5">google.com</span></div>
<div class="t r" id="t66" style="left:740.61px;top:547.82px;font-size:13.62px;font-weight:400;color:#3e4852;transform:scaleX(0.9836);"><span style="color:#9aa0a6">Greeting:</span> Holiday Promo: 50% OFF</div>
<div class="t r" id="t67" style="left:763.43px;top:597.77px;font-size:13.91px;font-weight:400;color:#4b5561;transform:scaleX(0.9467);">Custom variables</div>
<div class="t r" id="t68" style="left:740.63px;top:642.52px;font-size:13.62px;font-weight:400;color:#3e4852;transform:scaleX(0.9513);"><span style="color:#9aa0a6">Shop login:</span> p.beesly@gmail.com</div>
<div class="t r" id="t69" style="left:740.60px;top:667.52px;font-size:13.62px;font-weight:400;color:#3e4852;transform:scaleX(0.9960);"><span style="color:#9aa0a6">Discounts:</span> None</div>
<div class="t r" id="t70" style="left:754.43px;top:125.36px;font-size:16.52px;font-weight:400;color:#fff;transform:scaleX(0.9429);-webkit-text-stroke:0">PB</div>
<div class="t r" id="t71" style="left:80.44px;top:197.77px;font-size:14.49px;font-weight:400;color:#fff;transform:scaleX(0.9333);-webkit-text-stroke:0">C</div>
<div class="t r" id="t72" style="left:77.55px;top:246.31px;font-size:14.49px;font-weight:400;color:#fff;transform:scaleX(0.8000);-webkit-text-stroke:0">ST</div>
<div class="t r" id="t73" style="left:80.44px;top:294.85px;font-size:14.49px;font-weight:400;color:#fff;transform:scaleX(0.9333);-webkit-text-stroke:0">C</div>
<div class="t r" id="t74" style="left:81.03px;top:343.39px;font-size:14.49px;font-weight:400;color:#fff;transform:scaleX(0.8625);-webkit-text-stroke:0">S</div>
<div class="t r" id="t75" style="left:80.72px;top:440.47px;font-size:14.49px;font-weight:400;color:#fff;transform:scaleX(0.9000);-webkit-text-stroke:0">P</div>
<div class="t r" id="t76" style="left:80.44px;top:537.55px;font-size:14.49px;font-weight:400;color:#fff;transform:scaleX(0.9333);-webkit-text-stroke:0">C</div>
<div class="t r" id="t77" style="left:81.35px;top:634.63px;font-size:14.49px;font-weight:400;color:#fff;transform:scaleX(0.8250);-webkit-text-stroke:0">E</div><div class="a" style="left:625px;top:8px;width:12px;height:32px;background:#fff"></div></div></body></html>
